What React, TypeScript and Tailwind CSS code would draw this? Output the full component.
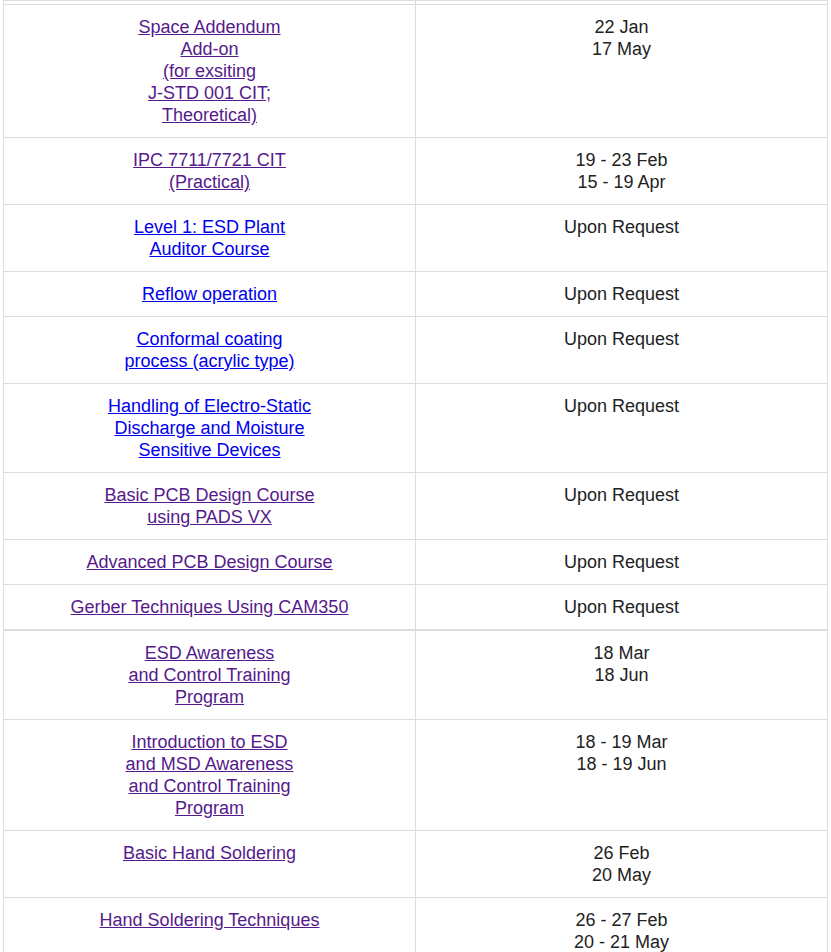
type Course = {
  title: string[];
  dates: string[];
  visited?: boolean;
};

const firstTable: Course[] = [
  {
    title: ["Space Addendum", "Add-on", "(for exsiting", "J-STD 001 CIT;", "Theoretical)"],
    dates: ["22 Jan", "17 May"],
    visited: true,
  },
  { title: ["IPC 7711/7721 CIT", "(Practical)"], dates: ["19 - 23 Feb", "15 - 19 Apr"], visited: true },
  { title: ["Level 1: ESD Plant", "Auditor Course"], dates: ["Upon Request"] },
  { title: ["Reflow operation"], dates: ["Upon Request"] },
  { title: ["Conformal coating", "process (acrylic type)"], dates: ["Upon Request"] },
  {
    title: ["Handling of Electro-Static", "Discharge and Moisture", "Sensitive Devices"],
    dates: ["Upon Request"],
  },
  { title: ["Basic PCB Design Course", "using PADS VX"], dates: ["Upon Request"], visited: true },
  { title: ["Advanced PCB Design Course"], dates: ["Upon Request"], visited: true },
  { title: ["Gerber Techniques Using CAM350"], dates: ["Upon Request"], visited: true },
];

const secondTable: Course[] = [
  { title: ["ESD Awareness", "and Control Training", "Program"], dates: ["18 Mar", "18 Jun"], visited: true },
  {
    title: ["Introduction to ESD", "and MSD Awareness", "and Control Training", "Program"],
    dates: ["18 - 19 Mar", "18 - 19 Jun"],
    visited: true,
  },
  { title: ["Basic Hand Soldering"], dates: ["26 Feb", "20 May"], visited: true },
  { title: ["Hand Soldering Techniques"], dates: ["26 - 27 Feb", "20 - 21 May"], visited: true },
];

const cell = "border border-[#dddddd] px-2 py-[11px] align-top text-center";

function CourseRow({ course }: { course: Course }) {
  return (
    <tr>
      <td className={cell}>
        <a
          href="#"
          className={
            "underline " + (course.visited ? "text-[#551a8b]" : "text-[#0000ee]")
          }
        >
          {course.title.map((line, i) => (
            <span key={i}>
              {line}
              {i < course.title.length - 1 ? <br /> : null}
            </span>
          ))}
        </a>
      </td>
      <td className={cell + " text-[#222222]"}>
        {course.dates.map((d, i) => (
          <div key={i}>{d}</div>
        ))}
      </td>
    </tr>
  );
}

export default function App() {
  return (
    <div className="bg-white pl-[3px] w-[831px] font-['Liberation_Sans',Arial,sans-serif] text-[18px] leading-[22px]">
      <table className="w-[825px] table-fixed border-collapse">
        <tbody>
          <tr>
            <td className="border border-[#dddddd] h-[4px] p-0"></td>
            <td className="border border-[#dddddd] h-[4px] p-0"></td>
          </tr>
          {firstTable.map((c, i) => (
            <CourseRow key={i} course={c} />
          ))}
        </tbody>
      </table>
      <table className="w-[825px] table-fixed border-collapse">
        <tbody>
          {secondTable.map((c, i) => (
            <CourseRow key={i} course={c} />
          ))}
        </tbody>
      </table>
    </div>
  );
}
